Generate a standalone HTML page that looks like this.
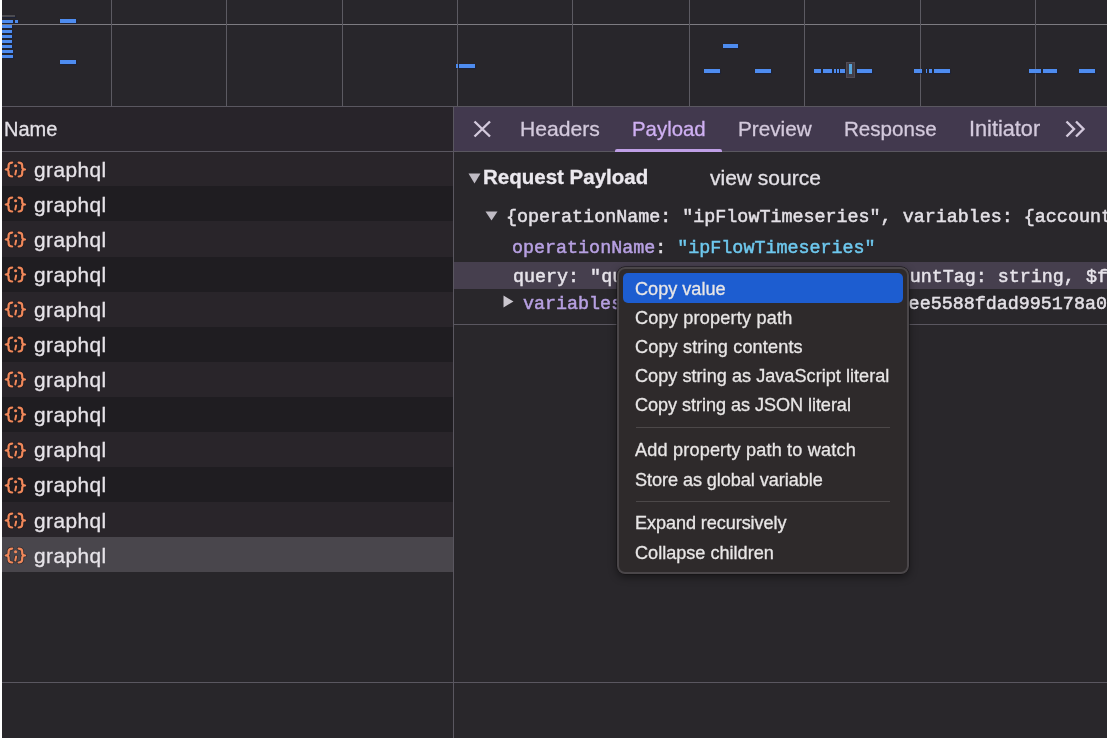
<!DOCTYPE html>
<html><head><meta charset="utf-8">
<style>
*{margin:0;padding:0;box-sizing:border-box}
html,body{width:1110px;height:740px;overflow:hidden;background:#fff}
body{position:relative;font-family:"Liberation Sans",sans-serif}
#app{position:absolute;left:2px;top:0;width:1105px;height:738px;background:#28262a}
.ov{position:absolute;left:2px;top:0;width:1105px;height:106px;background:#28262b}
.vg{position:absolute;top:0;width:1px;height:106px;background:#5c5a62}
.hg{position:absolute;left:2px;top:24px;width:1105px;height:1px;background:#7d7b81}
.bar{position:absolute;background:#4e8cf0;box-shadow:0 0 1px 0.5px rgba(15,30,70,0.5)}
.hl{position:absolute;height:1px;background:#5a5760}
.sep{position:absolute;left:453px;top:106px;width:1px;height:632px;background:#5a5760}
.nh{position:absolute;left:2px;top:107px;width:451px;height:45px;background:#28242a}
.txt{position:absolute;white-space:nowrap;color:#e3e0e6}
.row{position:absolute;left:2px;width:451px;height:35px}
.odd{background:#29252a}
.even{background:#1f1d21}
.sel{background:#49464c;width:452px}
.ic{position:absolute;left:0;top:0}
.gq{position:absolute;left:31.7px;top:0.5px;font-size:20.8px;line-height:35px;color:#e6e3e8;letter-spacing:0.45px;white-space:nowrap}
.rp{position:absolute;left:454px;top:152px;width:653px;height:586px;background:#29272b}
.tabs{position:absolute;left:454px;top:107px;width:653px;height:44px;background:#42394e}
.uline{position:absolute;left:615px;top:149px;width:107px;height:3px;background:#bf9fe6;border-radius:2px 2px 0 0}
.qhl{position:absolute;left:454px;top:262px;width:653px;height:27px;background:#463f4e}
.mono{font-family:"Liberation Mono",monospace}
.menu{position:absolute;left:617px;top:267px;width:292px;height:307px;background:#2e2a2b;border-radius:8px;border:2px solid #4a4649;box-shadow:0 0 0 0.5px #121012, 0 3px 8px rgba(0,0,0,0.45)}
.mhl{position:absolute;left:623px;top:273px;width:280px;height:30px;background:#1d5dd0;border-radius:5px}
.mi{position:absolute;left:635px;font-size:18.1px;color:#e8e6e6;white-space:nowrap}
.msep{position:absolute;left:636px;width:254px;height:1px;background:#4c4849}
.tri{position:absolute;width:0;height:0}
.txt,.gq,.mi{will-change:transform;-webkit-text-stroke-width:0.3px}
.mono{-webkit-text-stroke-width:0.5px}
</style></head><body>
<div id="app"></div>
<div class="ov">
</div>
<div class="hg"></div>
<div class="vg" style="left:111px"></div>
<div class="vg" style="left:226px"></div>
<div class="vg" style="left:342px"></div>
<div class="vg" style="left:457px"></div>
<div class="vg" style="left:572px"></div>
<div class="vg" style="left:689px"></div>
<div class="vg" style="left:804px"></div>
<div class="vg" style="left:920px"></div>
<div class="vg" style="left:1035px"></div>
<div class="bar" style="left:2px;top:15px;width:13px;height:2px;background:#4c4b50"></div>
<div class="bar" style="left:2px;top:20px;width:11px;height:3px"></div>
<div class="bar" style="left:15px;top:20px;width:2.5px;height:3px"></div>
<div class="bar" style="left:2px;top:25px;width:10px;height:3px"></div>
<div class="bar" style="left:2px;top:30px;width:10px;height:3px"></div>
<div class="bar" style="left:2px;top:35px;width:10px;height:3px"></div>
<div class="bar" style="left:2px;top:40px;width:10px;height:3px"></div>
<div class="bar" style="left:2px;top:45px;width:10px;height:3px"></div>
<div class="bar" style="left:2px;top:50px;width:11px;height:3px"></div>
<div class="bar" style="left:2px;top:55px;width:11px;height:3px"></div>
<div class="bar" style="left:60px;top:19px;width:16px;height:4px"></div>
<div class="bar" style="left:60px;top:59.5px;width:16px;height:4.0px"></div>
<div class="bar" style="left:456px;top:64px;width:1.5px;height:4px"></div>
<div class="bar" style="left:459px;top:64px;width:16px;height:4px"></div>
<div class="bar" style="left:722.5px;top:44px;width:15.5px;height:4px"></div>
<div class="bar" style="left:704px;top:69px;width:16px;height:4px"></div>
<div class="bar" style="left:755px;top:69px;width:16px;height:4px"></div>
<div class="bar" style="left:814px;top:69px;width:6.5px;height:4px"></div>
<div class="bar" style="left:822.5px;top:69px;width:9.5px;height:4px"></div>
<div class="bar" style="left:834px;top:69px;width:1.5px;height:4px"></div>
<div class="bar" style="left:837px;top:69px;width:1.5px;height:4px"></div>
<div class="bar" style="left:840px;top:69px;width:5px;height:4px"></div>
<div class="bar" style="left:856.5px;top:69px;width:15.5px;height:4px"></div>
<div class="bar" style="left:914px;top:69px;width:8px;height:4px"></div>
<div class="bar" style="left:925.5px;top:69px;width:1.5px;height:4px"></div>
<div class="bar" style="left:929px;top:69px;width:3px;height:4px"></div>
<div class="bar" style="left:934px;top:69px;width:15.5px;height:4px"></div>
<div class="bar" style="left:1029px;top:69px;width:12px;height:4px"></div>
<div class="bar" style="left:1042.5px;top:69px;width:14.5px;height:4px"></div>
<div class="bar" style="left:1079px;top:69px;width:16px;height:4px"></div>
<div style="position:absolute;left:846px;top:61.5px;width:9px;height:16px;background:#433f49;border:1px solid #524e58"></div>
<div style="position:absolute;left:848.5px;top:64px;width:3px;height:9.5px;background:#58a6dc"></div>
<div class="hl" style="left:2px;top:106px;width:1105px"></div>
<div class="nh"></div>
<div class="hl" style="left:2px;top:151px;width:451px"></div>
<div class="row odd" style="top:152px;height:34px"><svg class="ic" style="top:0.00px" width="28" height="35" viewBox="0 0 28 35"><g fill="none" stroke-linecap="round" stroke-linejoin="round"><g stroke="#181418" stroke-width="3.6" opacity="0.55"><path d="M10.2 10.6 C7.8 10.6 6.6 11.4 6.6 13.6 L6.6 15.3 C6.6 16.8 5.4 17.5 3.7 17.5 C5.4 17.5 6.6 18.3 6.6 19.8 L6.6 21.5 C6.6 23.7 7.8 24.5 10.2 24.5"/><path d="M16.6 10.6 C19 10.6 20.2 11.4 20.2 13.6 L20.2 15.3 C20.2 16.8 21.4 17.5 23.1 17.5 C21.4 17.5 20.2 18.3 20.2 19.8 L20.2 21.5 C20.2 23.7 19 24.5 16.6 24.5"/><path d="M14.1 18.6 L13.3 22.4"/></g><g stroke="#f0885a" stroke-width="2.2"><path d="M10.2 10.6 C7.8 10.6 6.6 11.4 6.6 13.6 L6.6 15.3 C6.6 16.8 5.4 17.5 3.7 17.5 C5.4 17.5 6.6 18.3 6.6 19.8 L6.6 21.5 C6.6 23.7 7.8 24.5 10.2 24.5"/><path d="M16.6 10.6 C19 10.6 20.2 11.4 20.2 13.6 L20.2 15.3 C20.2 16.8 21.4 17.5 23.1 17.5 C21.4 17.5 20.2 18.3 20.2 19.8 L20.2 21.5 C20.2 23.7 19 24.5 16.6 24.5"/><path d="M14.1 18.6 L13.3 22.4" stroke-width="2.1"/></g></g><circle cx="13.6" cy="13.7" r="1.55" fill="#f0885a"/></svg><div class="gq" style="top:-0.20px">graphql</div></div>
<div class="row even" style="top:186px;height:35px"><svg class="ic" style="top:1.07px" width="28" height="35" viewBox="0 0 28 35"><g fill="none" stroke-linecap="round" stroke-linejoin="round"><g stroke="#181418" stroke-width="3.6" opacity="0.55"><path d="M10.2 10.6 C7.8 10.6 6.6 11.4 6.6 13.6 L6.6 15.3 C6.6 16.8 5.4 17.5 3.7 17.5 C5.4 17.5 6.6 18.3 6.6 19.8 L6.6 21.5 C6.6 23.7 7.8 24.5 10.2 24.5"/><path d="M16.6 10.6 C19 10.6 20.2 11.4 20.2 13.6 L20.2 15.3 C20.2 16.8 21.4 17.5 23.1 17.5 C21.4 17.5 20.2 18.3 20.2 19.8 L20.2 21.5 C20.2 23.7 19 24.5 16.6 24.5"/><path d="M14.1 18.6 L13.3 22.4"/></g><g stroke="#f0885a" stroke-width="2.2"><path d="M10.2 10.6 C7.8 10.6 6.6 11.4 6.6 13.6 L6.6 15.3 C6.6 16.8 5.4 17.5 3.7 17.5 C5.4 17.5 6.6 18.3 6.6 19.8 L6.6 21.5 C6.6 23.7 7.8 24.5 10.2 24.5"/><path d="M16.6 10.6 C19 10.6 20.2 11.4 20.2 13.6 L20.2 15.3 C20.2 16.8 21.4 17.5 23.1 17.5 C21.4 17.5 20.2 18.3 20.2 19.8 L20.2 21.5 C20.2 23.7 19 24.5 16.6 24.5"/><path d="M14.1 18.6 L13.3 22.4" stroke-width="2.1"/></g></g><circle cx="13.6" cy="13.7" r="1.55" fill="#f0885a"/></svg><div class="gq" style="top:0.87px">graphql</div></div>
<div class="row odd" style="top:221px;height:36px"><svg class="ic" style="top:1.14px" width="28" height="35" viewBox="0 0 28 35"><g fill="none" stroke-linecap="round" stroke-linejoin="round"><g stroke="#181418" stroke-width="3.6" opacity="0.55"><path d="M10.2 10.6 C7.8 10.6 6.6 11.4 6.6 13.6 L6.6 15.3 C6.6 16.8 5.4 17.5 3.7 17.5 C5.4 17.5 6.6 18.3 6.6 19.8 L6.6 21.5 C6.6 23.7 7.8 24.5 10.2 24.5"/><path d="M16.6 10.6 C19 10.6 20.2 11.4 20.2 13.6 L20.2 15.3 C20.2 16.8 21.4 17.5 23.1 17.5 C21.4 17.5 20.2 18.3 20.2 19.8 L20.2 21.5 C20.2 23.7 19 24.5 16.6 24.5"/><path d="M14.1 18.6 L13.3 22.4"/></g><g stroke="#f0885a" stroke-width="2.2"><path d="M10.2 10.6 C7.8 10.6 6.6 11.4 6.6 13.6 L6.6 15.3 C6.6 16.8 5.4 17.5 3.7 17.5 C5.4 17.5 6.6 18.3 6.6 19.8 L6.6 21.5 C6.6 23.7 7.8 24.5 10.2 24.5"/><path d="M16.6 10.6 C19 10.6 20.2 11.4 20.2 13.6 L20.2 15.3 C20.2 16.8 21.4 17.5 23.1 17.5 C21.4 17.5 20.2 18.3 20.2 19.8 L20.2 21.5 C20.2 23.7 19 24.5 16.6 24.5"/><path d="M14.1 18.6 L13.3 22.4" stroke-width="2.1"/></g></g><circle cx="13.6" cy="13.7" r="1.55" fill="#f0885a"/></svg><div class="gq" style="top:0.94px">graphql</div></div>
<div class="row even" style="top:257px;height:35px"><svg class="ic" style="top:0.21px" width="28" height="35" viewBox="0 0 28 35"><g fill="none" stroke-linecap="round" stroke-linejoin="round"><g stroke="#181418" stroke-width="3.6" opacity="0.55"><path d="M10.2 10.6 C7.8 10.6 6.6 11.4 6.6 13.6 L6.6 15.3 C6.6 16.8 5.4 17.5 3.7 17.5 C5.4 17.5 6.6 18.3 6.6 19.8 L6.6 21.5 C6.6 23.7 7.8 24.5 10.2 24.5"/><path d="M16.6 10.6 C19 10.6 20.2 11.4 20.2 13.6 L20.2 15.3 C20.2 16.8 21.4 17.5 23.1 17.5 C21.4 17.5 20.2 18.3 20.2 19.8 L20.2 21.5 C20.2 23.7 19 24.5 16.6 24.5"/><path d="M14.1 18.6 L13.3 22.4"/></g><g stroke="#f0885a" stroke-width="2.2"><path d="M10.2 10.6 C7.8 10.6 6.6 11.4 6.6 13.6 L6.6 15.3 C6.6 16.8 5.4 17.5 3.7 17.5 C5.4 17.5 6.6 18.3 6.6 19.8 L6.6 21.5 C6.6 23.7 7.8 24.5 10.2 24.5"/><path d="M16.6 10.6 C19 10.6 20.2 11.4 20.2 13.6 L20.2 15.3 C20.2 16.8 21.4 17.5 23.1 17.5 C21.4 17.5 20.2 18.3 20.2 19.8 L20.2 21.5 C20.2 23.7 19 24.5 16.6 24.5"/><path d="M14.1 18.6 L13.3 22.4" stroke-width="2.1"/></g></g><circle cx="13.6" cy="13.7" r="1.55" fill="#f0885a"/></svg><div class="gq" style="top:0.01px">graphql</div></div>
<div class="row odd" style="top:292px;height:35px"><svg class="ic" style="top:0.28px" width="28" height="35" viewBox="0 0 28 35"><g fill="none" stroke-linecap="round" stroke-linejoin="round"><g stroke="#181418" stroke-width="3.6" opacity="0.55"><path d="M10.2 10.6 C7.8 10.6 6.6 11.4 6.6 13.6 L6.6 15.3 C6.6 16.8 5.4 17.5 3.7 17.5 C5.4 17.5 6.6 18.3 6.6 19.8 L6.6 21.5 C6.6 23.7 7.8 24.5 10.2 24.5"/><path d="M16.6 10.6 C19 10.6 20.2 11.4 20.2 13.6 L20.2 15.3 C20.2 16.8 21.4 17.5 23.1 17.5 C21.4 17.5 20.2 18.3 20.2 19.8 L20.2 21.5 C20.2 23.7 19 24.5 16.6 24.5"/><path d="M14.1 18.6 L13.3 22.4"/></g><g stroke="#f0885a" stroke-width="2.2"><path d="M10.2 10.6 C7.8 10.6 6.6 11.4 6.6 13.6 L6.6 15.3 C6.6 16.8 5.4 17.5 3.7 17.5 C5.4 17.5 6.6 18.3 6.6 19.8 L6.6 21.5 C6.6 23.7 7.8 24.5 10.2 24.5"/><path d="M16.6 10.6 C19 10.6 20.2 11.4 20.2 13.6 L20.2 15.3 C20.2 16.8 21.4 17.5 23.1 17.5 C21.4 17.5 20.2 18.3 20.2 19.8 L20.2 21.5 C20.2 23.7 19 24.5 16.6 24.5"/><path d="M14.1 18.6 L13.3 22.4" stroke-width="2.1"/></g></g><circle cx="13.6" cy="13.7" r="1.55" fill="#f0885a"/></svg><div class="gq" style="top:0.08px">graphql</div></div>
<div class="row even" style="top:327px;height:35px"><svg class="ic" style="top:0.35px" width="28" height="35" viewBox="0 0 28 35"><g fill="none" stroke-linecap="round" stroke-linejoin="round"><g stroke="#181418" stroke-width="3.6" opacity="0.55"><path d="M10.2 10.6 C7.8 10.6 6.6 11.4 6.6 13.6 L6.6 15.3 C6.6 16.8 5.4 17.5 3.7 17.5 C5.4 17.5 6.6 18.3 6.6 19.8 L6.6 21.5 C6.6 23.7 7.8 24.5 10.2 24.5"/><path d="M16.6 10.6 C19 10.6 20.2 11.4 20.2 13.6 L20.2 15.3 C20.2 16.8 21.4 17.5 23.1 17.5 C21.4 17.5 20.2 18.3 20.2 19.8 L20.2 21.5 C20.2 23.7 19 24.5 16.6 24.5"/><path d="M14.1 18.6 L13.3 22.4"/></g><g stroke="#f0885a" stroke-width="2.2"><path d="M10.2 10.6 C7.8 10.6 6.6 11.4 6.6 13.6 L6.6 15.3 C6.6 16.8 5.4 17.5 3.7 17.5 C5.4 17.5 6.6 18.3 6.6 19.8 L6.6 21.5 C6.6 23.7 7.8 24.5 10.2 24.5"/><path d="M16.6 10.6 C19 10.6 20.2 11.4 20.2 13.6 L20.2 15.3 C20.2 16.8 21.4 17.5 23.1 17.5 C21.4 17.5 20.2 18.3 20.2 19.8 L20.2 21.5 C20.2 23.7 19 24.5 16.6 24.5"/><path d="M14.1 18.6 L13.3 22.4" stroke-width="2.1"/></g></g><circle cx="13.6" cy="13.7" r="1.55" fill="#f0885a"/></svg><div class="gq" style="top:0.15px">graphql</div></div>
<div class="row odd" style="top:362px;height:35px"><svg class="ic" style="top:0.42px" width="28" height="35" viewBox="0 0 28 35"><g fill="none" stroke-linecap="round" stroke-linejoin="round"><g stroke="#181418" stroke-width="3.6" opacity="0.55"><path d="M10.2 10.6 C7.8 10.6 6.6 11.4 6.6 13.6 L6.6 15.3 C6.6 16.8 5.4 17.5 3.7 17.5 C5.4 17.5 6.6 18.3 6.6 19.8 L6.6 21.5 C6.6 23.7 7.8 24.5 10.2 24.5"/><path d="M16.6 10.6 C19 10.6 20.2 11.4 20.2 13.6 L20.2 15.3 C20.2 16.8 21.4 17.5 23.1 17.5 C21.4 17.5 20.2 18.3 20.2 19.8 L20.2 21.5 C20.2 23.7 19 24.5 16.6 24.5"/><path d="M14.1 18.6 L13.3 22.4"/></g><g stroke="#f0885a" stroke-width="2.2"><path d="M10.2 10.6 C7.8 10.6 6.6 11.4 6.6 13.6 L6.6 15.3 C6.6 16.8 5.4 17.5 3.7 17.5 C5.4 17.5 6.6 18.3 6.6 19.8 L6.6 21.5 C6.6 23.7 7.8 24.5 10.2 24.5"/><path d="M16.6 10.6 C19 10.6 20.2 11.4 20.2 13.6 L20.2 15.3 C20.2 16.8 21.4 17.5 23.1 17.5 C21.4 17.5 20.2 18.3 20.2 19.8 L20.2 21.5 C20.2 23.7 19 24.5 16.6 24.5"/><path d="M14.1 18.6 L13.3 22.4" stroke-width="2.1"/></g></g><circle cx="13.6" cy="13.7" r="1.55" fill="#f0885a"/></svg><div class="gq" style="top:0.22px">graphql</div></div>
<div class="row even" style="top:397px;height:35px"><svg class="ic" style="top:0.49px" width="28" height="35" viewBox="0 0 28 35"><g fill="none" stroke-linecap="round" stroke-linejoin="round"><g stroke="#181418" stroke-width="3.6" opacity="0.55"><path d="M10.2 10.6 C7.8 10.6 6.6 11.4 6.6 13.6 L6.6 15.3 C6.6 16.8 5.4 17.5 3.7 17.5 C5.4 17.5 6.6 18.3 6.6 19.8 L6.6 21.5 C6.6 23.7 7.8 24.5 10.2 24.5"/><path d="M16.6 10.6 C19 10.6 20.2 11.4 20.2 13.6 L20.2 15.3 C20.2 16.8 21.4 17.5 23.1 17.5 C21.4 17.5 20.2 18.3 20.2 19.8 L20.2 21.5 C20.2 23.7 19 24.5 16.6 24.5"/><path d="M14.1 18.6 L13.3 22.4"/></g><g stroke="#f0885a" stroke-width="2.2"><path d="M10.2 10.6 C7.8 10.6 6.6 11.4 6.6 13.6 L6.6 15.3 C6.6 16.8 5.4 17.5 3.7 17.5 C5.4 17.5 6.6 18.3 6.6 19.8 L6.6 21.5 C6.6 23.7 7.8 24.5 10.2 24.5"/><path d="M16.6 10.6 C19 10.6 20.2 11.4 20.2 13.6 L20.2 15.3 C20.2 16.8 21.4 17.5 23.1 17.5 C21.4 17.5 20.2 18.3 20.2 19.8 L20.2 21.5 C20.2 23.7 19 24.5 16.6 24.5"/><path d="M14.1 18.6 L13.3 22.4" stroke-width="2.1"/></g></g><circle cx="13.6" cy="13.7" r="1.55" fill="#f0885a"/></svg><div class="gq" style="top:0.29px">graphql</div></div>
<div class="row odd" style="top:432px;height:35px"><svg class="ic" style="top:0.56px" width="28" height="35" viewBox="0 0 28 35"><g fill="none" stroke-linecap="round" stroke-linejoin="round"><g stroke="#181418" stroke-width="3.6" opacity="0.55"><path d="M10.2 10.6 C7.8 10.6 6.6 11.4 6.6 13.6 L6.6 15.3 C6.6 16.8 5.4 17.5 3.7 17.5 C5.4 17.5 6.6 18.3 6.6 19.8 L6.6 21.5 C6.6 23.7 7.8 24.5 10.2 24.5"/><path d="M16.6 10.6 C19 10.6 20.2 11.4 20.2 13.6 L20.2 15.3 C20.2 16.8 21.4 17.5 23.1 17.5 C21.4 17.5 20.2 18.3 20.2 19.8 L20.2 21.5 C20.2 23.7 19 24.5 16.6 24.5"/><path d="M14.1 18.6 L13.3 22.4"/></g><g stroke="#f0885a" stroke-width="2.2"><path d="M10.2 10.6 C7.8 10.6 6.6 11.4 6.6 13.6 L6.6 15.3 C6.6 16.8 5.4 17.5 3.7 17.5 C5.4 17.5 6.6 18.3 6.6 19.8 L6.6 21.5 C6.6 23.7 7.8 24.5 10.2 24.5"/><path d="M16.6 10.6 C19 10.6 20.2 11.4 20.2 13.6 L20.2 15.3 C20.2 16.8 21.4 17.5 23.1 17.5 C21.4 17.5 20.2 18.3 20.2 19.8 L20.2 21.5 C20.2 23.7 19 24.5 16.6 24.5"/><path d="M14.1 18.6 L13.3 22.4" stroke-width="2.1"/></g></g><circle cx="13.6" cy="13.7" r="1.55" fill="#f0885a"/></svg><div class="gq" style="top:0.36px">graphql</div></div>
<div class="row even" style="top:467px;height:35px"><svg class="ic" style="top:0.63px" width="28" height="35" viewBox="0 0 28 35"><g fill="none" stroke-linecap="round" stroke-linejoin="round"><g stroke="#181418" stroke-width="3.6" opacity="0.55"><path d="M10.2 10.6 C7.8 10.6 6.6 11.4 6.6 13.6 L6.6 15.3 C6.6 16.8 5.4 17.5 3.7 17.5 C5.4 17.5 6.6 18.3 6.6 19.8 L6.6 21.5 C6.6 23.7 7.8 24.5 10.2 24.5"/><path d="M16.6 10.6 C19 10.6 20.2 11.4 20.2 13.6 L20.2 15.3 C20.2 16.8 21.4 17.5 23.1 17.5 C21.4 17.5 20.2 18.3 20.2 19.8 L20.2 21.5 C20.2 23.7 19 24.5 16.6 24.5"/><path d="M14.1 18.6 L13.3 22.4"/></g><g stroke="#f0885a" stroke-width="2.2"><path d="M10.2 10.6 C7.8 10.6 6.6 11.4 6.6 13.6 L6.6 15.3 C6.6 16.8 5.4 17.5 3.7 17.5 C5.4 17.5 6.6 18.3 6.6 19.8 L6.6 21.5 C6.6 23.7 7.8 24.5 10.2 24.5"/><path d="M16.6 10.6 C19 10.6 20.2 11.4 20.2 13.6 L20.2 15.3 C20.2 16.8 21.4 17.5 23.1 17.5 C21.4 17.5 20.2 18.3 20.2 19.8 L20.2 21.5 C20.2 23.7 19 24.5 16.6 24.5"/><path d="M14.1 18.6 L13.3 22.4" stroke-width="2.1"/></g></g><circle cx="13.6" cy="13.7" r="1.55" fill="#f0885a"/></svg><div class="gq" style="top:0.43px">graphql</div></div>
<div class="row odd" style="top:502px;height:35px"><svg class="ic" style="top:0.70px" width="28" height="35" viewBox="0 0 28 35"><g fill="none" stroke-linecap="round" stroke-linejoin="round"><g stroke="#181418" stroke-width="3.6" opacity="0.55"><path d="M10.2 10.6 C7.8 10.6 6.6 11.4 6.6 13.6 L6.6 15.3 C6.6 16.8 5.4 17.5 3.7 17.5 C5.4 17.5 6.6 18.3 6.6 19.8 L6.6 21.5 C6.6 23.7 7.8 24.5 10.2 24.5"/><path d="M16.6 10.6 C19 10.6 20.2 11.4 20.2 13.6 L20.2 15.3 C20.2 16.8 21.4 17.5 23.1 17.5 C21.4 17.5 20.2 18.3 20.2 19.8 L20.2 21.5 C20.2 23.7 19 24.5 16.6 24.5"/><path d="M14.1 18.6 L13.3 22.4"/></g><g stroke="#f0885a" stroke-width="2.2"><path d="M10.2 10.6 C7.8 10.6 6.6 11.4 6.6 13.6 L6.6 15.3 C6.6 16.8 5.4 17.5 3.7 17.5 C5.4 17.5 6.6 18.3 6.6 19.8 L6.6 21.5 C6.6 23.7 7.8 24.5 10.2 24.5"/><path d="M16.6 10.6 C19 10.6 20.2 11.4 20.2 13.6 L20.2 15.3 C20.2 16.8 21.4 17.5 23.1 17.5 C21.4 17.5 20.2 18.3 20.2 19.8 L20.2 21.5 C20.2 23.7 19 24.5 16.6 24.5"/><path d="M14.1 18.6 L13.3 22.4" stroke-width="2.1"/></g></g><circle cx="13.6" cy="13.7" r="1.55" fill="#f0885a"/></svg><div class="gq" style="top:0.50px">graphql</div></div>
<div class="row sel" style="top:537px;height:35px"><svg class="ic" style="top:0.77px" width="28" height="35" viewBox="0 0 28 35"><g fill="none" stroke-linecap="round" stroke-linejoin="round"><g stroke="#181418" stroke-width="3.6" opacity="0.55"><path d="M10.2 10.6 C7.8 10.6 6.6 11.4 6.6 13.6 L6.6 15.3 C6.6 16.8 5.4 17.5 3.7 17.5 C5.4 17.5 6.6 18.3 6.6 19.8 L6.6 21.5 C6.6 23.7 7.8 24.5 10.2 24.5"/><path d="M16.6 10.6 C19 10.6 20.2 11.4 20.2 13.6 L20.2 15.3 C20.2 16.8 21.4 17.5 23.1 17.5 C21.4 17.5 20.2 18.3 20.2 19.8 L20.2 21.5 C20.2 23.7 19 24.5 16.6 24.5"/><path d="M14.1 18.6 L13.3 22.4"/></g><g stroke="#f0885a" stroke-width="2.2"><path d="M10.2 10.6 C7.8 10.6 6.6 11.4 6.6 13.6 L6.6 15.3 C6.6 16.8 5.4 17.5 3.7 17.5 C5.4 17.5 6.6 18.3 6.6 19.8 L6.6 21.5 C6.6 23.7 7.8 24.5 10.2 24.5"/><path d="M16.6 10.6 C19 10.6 20.2 11.4 20.2 13.6 L20.2 15.3 C20.2 16.8 21.4 17.5 23.1 17.5 C21.4 17.5 20.2 18.3 20.2 19.8 L20.2 21.5 C20.2 23.7 19 24.5 16.6 24.5"/><path d="M14.1 18.6 L13.3 22.4" stroke-width="2.1"/></g></g><circle cx="13.6" cy="13.7" r="1.55" fill="#f0885a"/></svg><div class="gq" style="top:0.57px">graphql</div></div>
<div class="rp"></div>
<div class="hl" style="left:2px;top:682px;width:1105px"></div>
<div class="tabs"></div>
<div class="hl" style="left:454px;top:151px;width:653px"></div>
<div class="uline"></div>
<svg style="position:absolute;left:472px;top:119px" width="21" height="20" viewBox="0 0 21 20"><path d="M2.5 2.5 L18 17.5 M18 2.5 L2.5 17.5" stroke="#d3c9dc" stroke-width="2.4" fill="none"/></svg>
<svg style="position:absolute;left:1064px;top:119px" width="24" height="20" viewBox="0 0 24 20"><path d="M2.5 2.5 L10 10 L2.5 17.5 M12 2.5 L19.5 10 L12 17.5" stroke="#d3c9dc" stroke-width="2.4" fill="none"/></svg>
<div class="sep"></div>
<div class="qhl"></div>
<div class="hl" style="left:454px;top:324px;width:653px"></div>
<svg style="position:absolute;left:468px;top:173px" width="13" height="11" viewBox="0 0 13 11"><path d="M0.5 0.5 L12.5 0.5 L6.5 10.5 Z" fill="#bfbbc4"/></svg>
<svg style="position:absolute;left:485px;top:211px" width="13" height="10" viewBox="0 0 13 10"><path d="M0.5 0.5 L12.5 0.5 L6.5 9.5 Z" fill="#bfbbc4"/></svg>
<svg style="position:absolute;left:503px;top:295px" width="11" height="13" viewBox="0 0 11 13"><path d="M0.5 0.5 L10.5 6.5 L0.5 12.5 Z" fill="#cac6ce"/></svg>
<div style="position:absolute;left:0;top:0;width:1107px;height:738px;overflow:hidden"><div class="txt" style="left:4px;top:113.57px;line-height:30px;font-size:20px;">Name</div>
<div class="txt" style="left:519.8px;top:114.29px;line-height:30px;font-size:21.1px;color:#d3c9dc">Headers</div>
<div class="txt" style="left:631.5px;top:113.83px;line-height:30px;font-size:20.4px;color:#cfb0f2">Payload</div>
<div class="txt" style="left:738.3px;top:114.43px;line-height:30px;font-size:20.7px;color:#d3c9dc">Preview</div>
<div class="txt" style="left:844.3px;top:114.46px;line-height:30px;font-size:20.6px;color:#d3c9dc">Response</div>
<div class="txt" style="left:969.3px;top:114.08px;line-height:30px;font-size:21.7px;color:#d3c9dc">Initiator</div>
<div class="txt" style="left:483px;top:162.40px;line-height:30px;font-size:20.5px;color:#ebe8ee"><b>Request Payload</b></div>
<div class="txt" style="left:710px;top:163.02px;line-height:30px;font-size:21px;color:#e3e0e6">view source</div>
<div class="txt mono" style="left:505.5px;top:203.00px;line-height:30px;font-size:18.38px;">{operationName: "ipFlowTimeseries", variables: {accountTag: "0c2d8e1a3eee5588fdad995178a0c4"}}</div>
<div class="txt mono" style="left:512px;top:233.60px;line-height:30px;font-size:18.38px;"><span style="color:#b7a0e2">operationName</span>: <span style="color:#6ec8ee">"ipFlowTimeseries"</span></div>
<div class="txt mono" style="left:512.8px;top:263.10px;line-height:30px;font-size:18.38px;"><span style="color:#e6e3ea">query: "query ipFlowTimeseries($accountTag: string, $filter: ZoneHttpRequestsFilter)"</span></div>
<div class="txt mono" style="left:522.5px;top:289.70px;line-height:30px;font-size:18.38px;"><span style="color:#b7a0e2">variables</span>: {accountTag: "0c2d8e1a3eee5588fdad995178a0c4"}</div></div>
<div class="menu"></div>
<div class="mhl"></div>
<div class="msep" style="top:427px"></div>
<div class="msep" style="top:501px"></div>
<div class="mi" style="top:277.73px;line-height:22px;letter-spacing:0px">Copy value</div>
<div class="mi" style="top:306.93px;line-height:22px;letter-spacing:0.2px">Copy property path</div>
<div class="mi" style="top:336.33px;line-height:22px;letter-spacing:0.14px">Copy string contents</div>
<div class="mi" style="top:365.43px;line-height:22px;letter-spacing:0.03px">Copy string as JavaScript literal</div>
<div class="mi" style="top:394.43px;line-height:22px;letter-spacing:-0.05px">Copy string as JSON literal</div>
<div class="mi" style="top:438.93px;line-height:22px;letter-spacing:0.18px">Add property path to watch</div>
<div class="mi" style="top:468.73px;line-height:22px;letter-spacing:-0.06px">Store as global variable</div>
<div class="mi" style="top:512.23px;line-height:22px;letter-spacing:-0.08px">Expand recursively</div>
<div class="mi" style="top:541.53px;line-height:22px;letter-spacing:0px">Collapse children</div>
</body></html>
